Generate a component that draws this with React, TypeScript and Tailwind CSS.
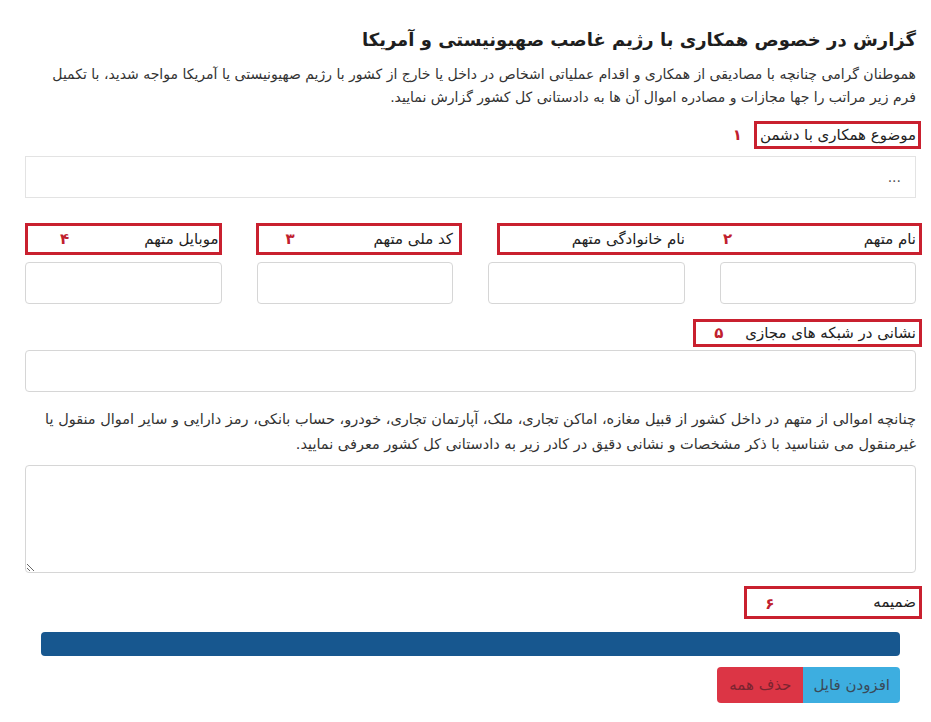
import React from 'react';

const font = { fontFamily: '"DejaVu Sans", Tahoma, sans-serif' };

// شماره قرمز کنار برچسب‌ها
function Num({ n }: { n: string }) {
  return <span className="text-[#c0202e] font-bold text-[15px]">{n}</span>;
}

export default function App() {
  const input = 'w-full h-[42px] border border-[#d6d6d6] rounded-[4px] bg-white px-3 text-[14px] outline-none';

  return (
    <div dir="rtl" style={font} className="w-[931px] min-h-[722px] bg-white text-[#222] pl-[25px] pr-[15px] pt-[25px]">
      <h1 className="text-[18px] leading-[30px] font-bold text-[#1e1e1e]">گزارش در خصوص همکاری با رژیم غاصب صهیونیستی و آمریکا</h1>
      <p className="mt-[8px] text-[14px] leading-[23px] text-[#333] whitespace-nowrap">
        هموطنان گرامی چنانچه با مصادیقی از همکاری و اقدام عملیاتی اشخاص در داخل یا خارج از کشور با رژیم صهیونیستی یا آمریکا مواجه شدید، با تکمیل
        <br />
        فرم زیر مراتب را جها مجازات و مصادره اموال آن ها به دادستانی کل کشور گزارش نمایید.
      </p>

      {/* ۱ */}
      <div className="mt-[12px] flex items-center gap-[12px]">
        <div className="-mr-[5px] h-[28px] border-[3px] border-[#c9202f] pr-[2px] pl-[3px] flex items-center text-[15px]">موضوع همکاری با دشمن</div>
        <Num n="۱" />
      </div>
      <div className="mt-[7px] h-[42px] border border-[#e3e3e3] flex items-center px-[14px] text-[14px] text-[#555]">...</div>

      {/* ردیف ۲ تا ۴ */}
      <div className="mt-[25px] grid grid-cols-4 gap-x-[35px] text-[15px]">
        <div className="col-span-2 -mr-[6px] ml-[9px] h-[32px] border-[3px] border-[#c9202f] pr-[3px] flex items-center">
          <div className="w-[193px] flex items-center justify-between">
            <span>نام متهم</span>
            <Num n="۲" />
          </div>
          <span className="mr-[38px]">نام خانوادگی متهم</span>
        </div>
        <div className="-mr-[9px] -ml-[1px] h-[32px] border-[3px] border-[#c9202f] pr-[6px] pl-[27px] flex items-center justify-between">
          <span>کد ملی متهم</span>
          <Num n="۳" />
        </div>
        <div className="h-[32px] border-[3px] border-[#c9202f] pr-0 pl-[32px] flex items-center justify-between">
          <span>موبایل متهم</span>
          <Num n="۴" />
        </div>
      </div>
      <div className="mt-[7px] grid grid-cols-4 gap-x-[35px]">
        <input className={input} />
        <input className={input} />
        <input className={input} />
        <input className={input} />
      </div>

      {/* ۵ */}
      <div className="mt-[15px] flex">
        <div className="-mr-[6px] h-[28px] border-[3px] border-[#c9202f] pr-[3px] pl-[18px] flex items-center gap-[22px] text-[15px]">
          <span>نشانی در شبکه های مجازی</span>
          <Num n="۵" />
        </div>
      </div>
      <input className={`${input} mt-[3px] block`} />

      <p className="mt-[15px] text-[14.5px] leading-[25px] text-[#333] whitespace-nowrap">
        چنانچه اموالی از متهم در داخل کشور از قبیل مغازه، اماکن تجاری، ملک، آپارتمان تجاری، خودرو، حساب بانکی، رمز دارایی و سایر اموال منقول یا
        <br />
        غیرمنقول می شناسید با ذکر مشخصات و نشانی دقیق در کادر زیر به دادستانی کل کشور معرفی نمایید.
      </p>
      <textarea className="mt-[8px] block w-full h-[108px] border border-[#d6d6d6] rounded-[4px] outline-none p-2" />

      {/* ۶ */}
      <div className="mt-[13px] flex">
        <div className="-mr-[6px] h-[33px] border-[3px] border-[#c9202f] pr-[3px] pl-[126px] relative flex items-center text-[15px]">
          <span>ضمیمه</span>
          <span className="absolute left-[18px] top-[4px]"><Num n="۶" /></span>
        </div>
      </div>

      <div className="px-[16px]">
        <div className="mt-[13px] h-[24px] rounded-[4px] bg-[#17578f]" />
        <div className="mt-[11px] flex">
          <button className="h-[36px] px-[10px] bg-[#3daee0] text-[#3a4a58] text-[15px] rounded-r-[4px]">افزودن فایل</button>
          <button className="h-[36px] px-[12px] bg-[#dc3545] text-[#7b2430] text-[15px] rounded-l-[4px]">حذف همه</button>
        </div>
      </div>
    </div>
  );
}
